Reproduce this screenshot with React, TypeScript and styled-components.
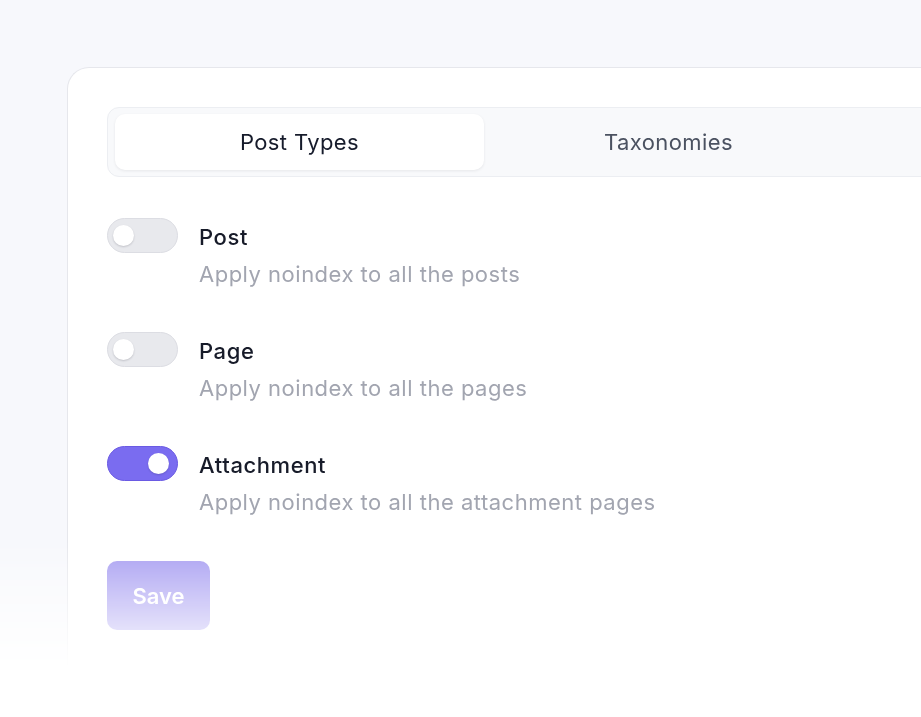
import styled, { createGlobalStyle } from "styled-components";

const GlobalStyle = createGlobalStyle`
  body {
    margin: 0;
    background: #ffffff;
    font-family: "Inter", "Noto Sans", sans-serif;
  }
`;

const settings = [
  { title: "Post", description: "Apply noindex to all the posts", on: false },
  { title: "Page", description: "Apply noindex to all the pages", on: false },
  { title: "Attachment", description: "Apply noindex to all the attachment pages", on: true },
];

const App = () => {
  return (
    <>
      <GlobalStyle />
      <Page>
        <Card>
          <TabBar>
            <Tab $active>Post Types</Tab>
            <Tab>Taxonomies</Tab>
          </TabBar>
          <List>
            {settings.map((s) => (
              <Row key={s.title}>
                <Toggle $on={s.on}>
                  <Knob $on={s.on} />
                </Toggle>
                <TextBlock>
                  <Title>{s.title}</Title>
                  <Description>{s.description}</Description>
                </TextBlock>
              </Row>
            ))}
          </List>
          <SaveButton>Save</SaveButton>
        </Card>
      </Page>
    </>
  );
};

export default App;

const Page = styled.div`
  width: 921px;
  height: 717px;
  box-sizing: border-box;
  padding: 67px 0 0 67px;
  background: #f7f8fc;
  overflow: hidden;
  -webkit-mask-image: linear-gradient(to bottom, #000 0, #000 540px, transparent 668px);
  mask-image: linear-gradient(to bottom, #000 0, #000 540px, transparent 668px);
`;

const Card = styled.div`
  width: 1300px;
  min-height: 700px;
  box-sizing: border-box;
  padding: 39px 39px;
  background: #ffffff;
  border: 1px solid #e6e7ec;
  border-right: none;
  border-radius: 22px 0 0 0;
`;

const TabBar = styled.div`
  display: flex;
  height: 70px;
  box-sizing: border-box;
  padding: 6px 7px;
  background: #f8f9fb;
  border: 1px solid #eceef2;
  border-radius: 12px;
`;

const Tab = styled.div<{ $active?: boolean }>`
  display: flex;
  align-items: center;
  justify-content: center;
  width: 369px;
  flex-shrink: 0;
  border-radius: 10px;
  font-size: 22px;
  letter-spacing: 0.4px;
  color: ${(p) => (p.$active ? "#161b2b" : "#4b5261")};
  background: ${(p) => (p.$active ? "#ffffff" : "transparent")};
  box-shadow: ${(p) => (p.$active ? "0 1px 3px rgba(20, 24, 40, 0.08)" : "none")};
`;

const List = styled.div`
  display: flex;
  flex-direction: column;
  gap: 44px;
  margin-top: 41px;
`;

const Row = styled.div`
  display: flex;
  align-items: flex-start;
  gap: 21px;
`;

const Toggle = styled.div<{ $on: boolean }>`
  position: relative;
  width: 71px;
  height: 35px;
  box-sizing: border-box;
  flex-shrink: 0;
  border-radius: 18px;
  background: ${(p) => (p.$on ? "#7a6cf0" : "#e8e9ed")};
  border: 1.5px solid ${(p) => (p.$on ? "#6a5ae3" : "#dcdde3")};
`;

const Knob = styled.span<{ $on: boolean }>`
  position: absolute;
  top: 6px;
  left: ${(p) => (p.$on ? "40px" : "5px")};
  width: 21px;
  height: 21px;
  border-radius: 50%;
  background: #ffffff;
  box-shadow: 0 1px 2px rgba(20, 24, 40, 0.18);
`;

const TextBlock = styled.div`
  display: flex;
  flex-direction: column;
  gap: 6px;
  padding-top: 2px;
`;

const Title = styled.div`
  font-size: 22px;
  font-weight: 500;
  letter-spacing: 0.6px;
  line-height: 34px;
  color: #171b29;
`;

const Description = styled.div`
  font-size: 22px;
  letter-spacing: 0.5px;
  line-height: 28px;
  color: #a2a5b0;
`;

const SaveButton = styled.button`
  display: block;
  margin-top: 45px;
  width: 103px;
  height: 69px;
  border: none;
  border-radius: 10px;
  background: #a69cf1;
  color: #ffffff;
  font-family: inherit;
  font-size: 22px;
  font-weight: 600;
  cursor: pointer;
`;
